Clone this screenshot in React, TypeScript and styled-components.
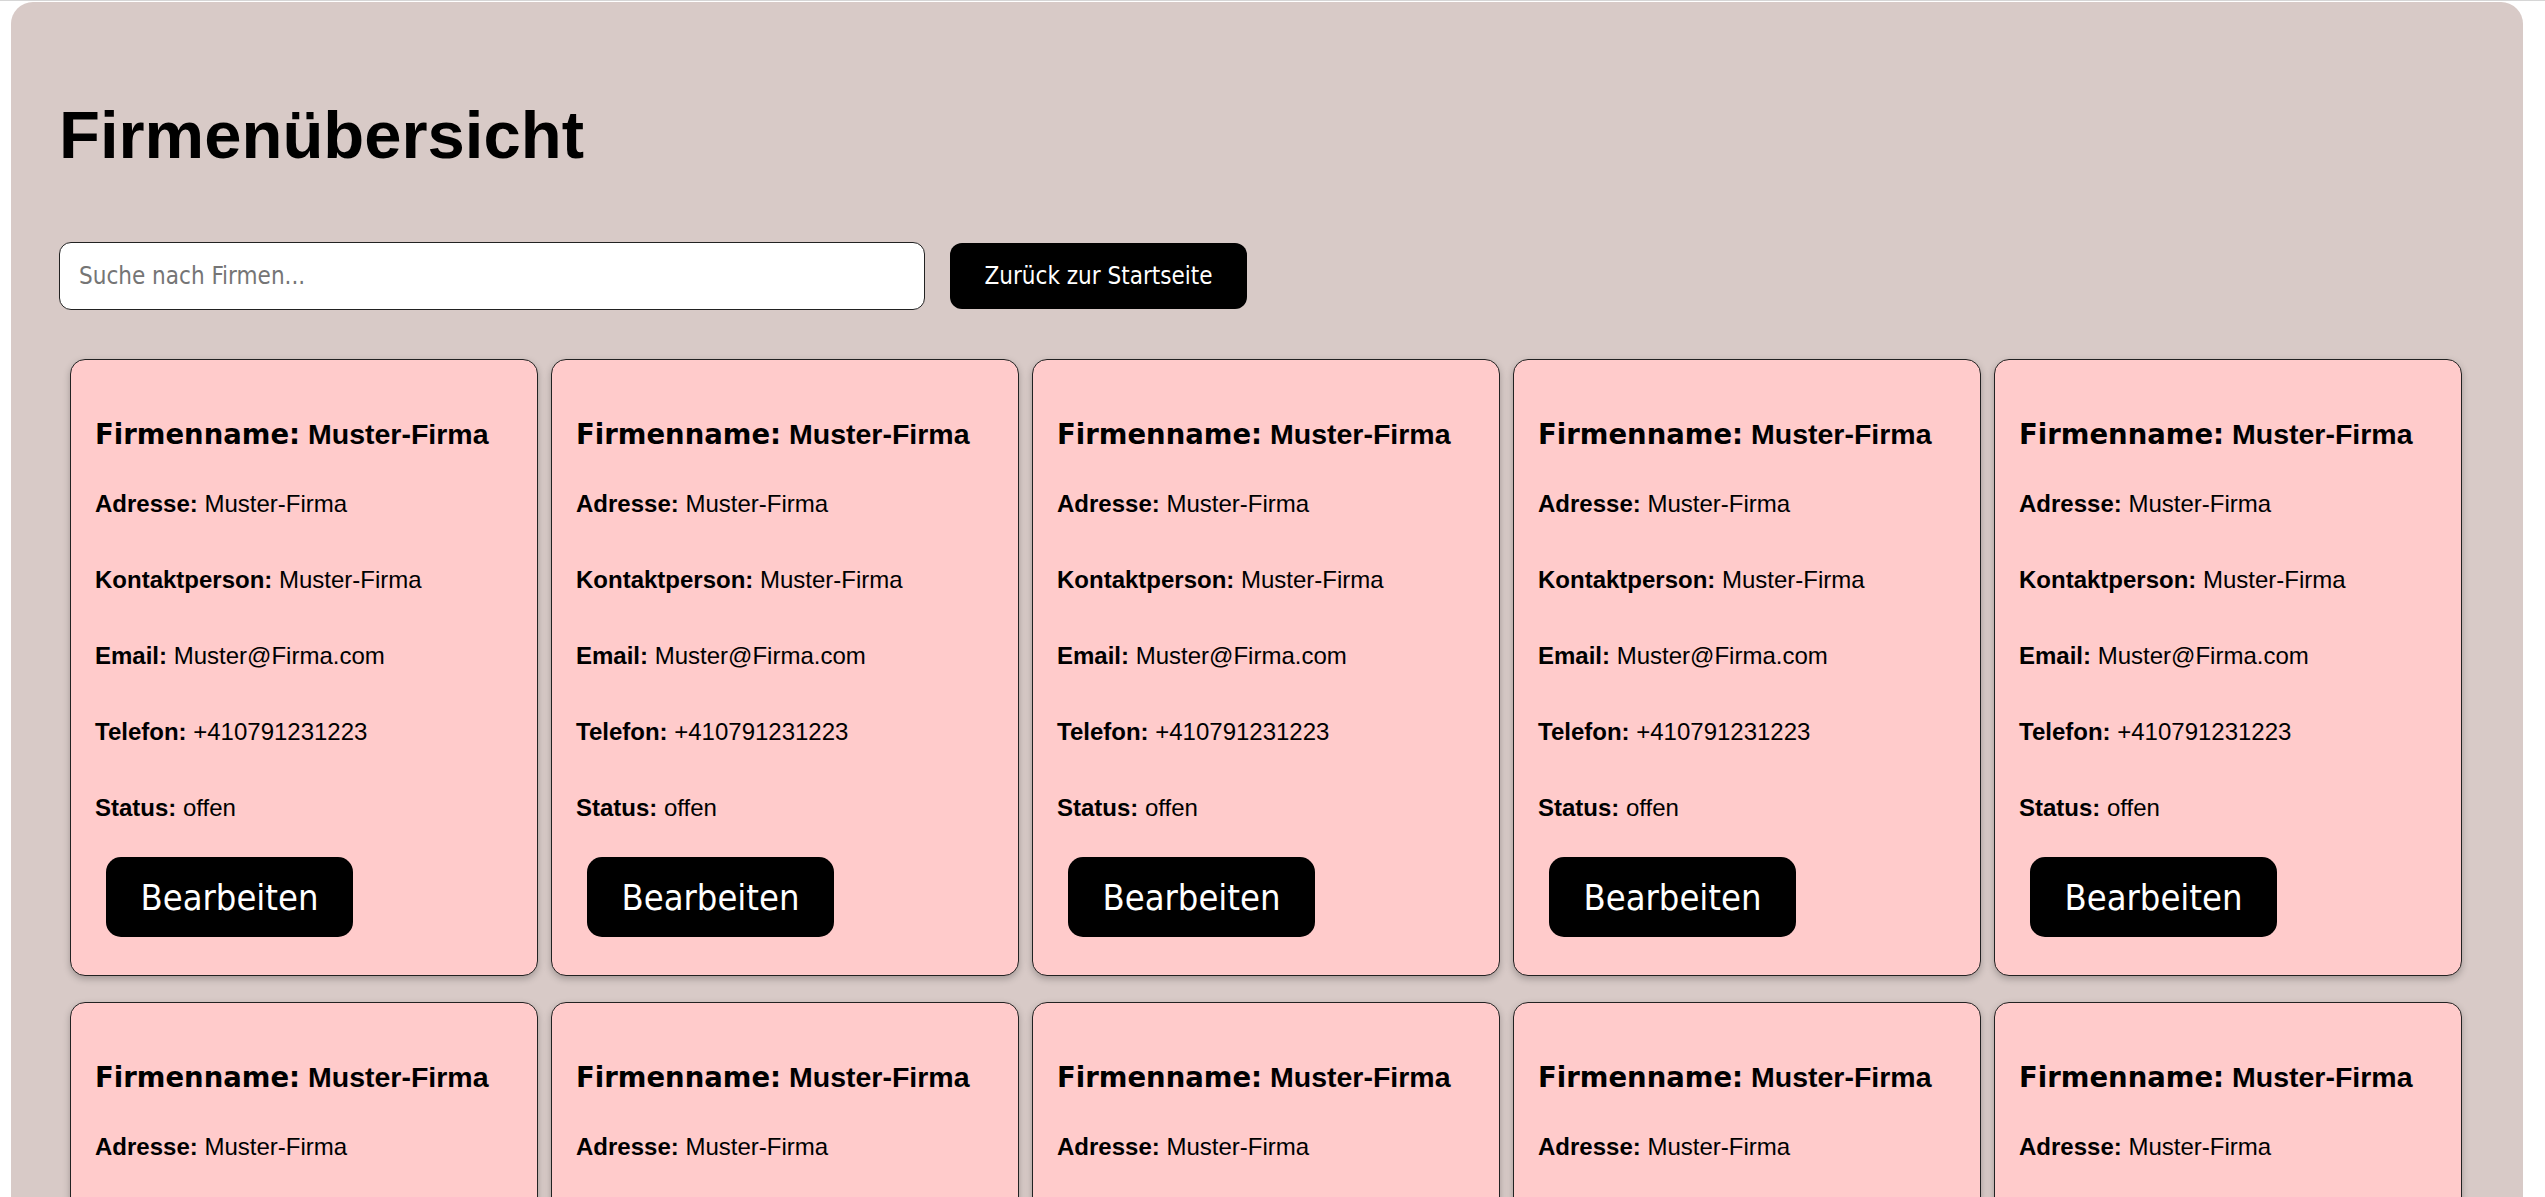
import React from 'react';
import styled, { createGlobalStyle } from 'styled-components';

interface Company {
  id: number;
  name: string;
  address: string;
  contact: string;
  email: string;
  phone: string;
  status: string;
}

const companies: Company[] = Array.from({ length: 10 }, (_, i) => ({
  id: i + 1,
  name: 'Muster-Firma',
  address: 'Muster-Firma',
  contact: 'Muster-Firma',
  email: 'Muster@Firma.com',
  phone: '+410791231223',
  status: 'offen',
}));

const uiFont = `'DejaVu Sans Condensed', 'Open Sans', sans-serif`;
const textFont = `'Liberation Sans', Arial, sans-serif`;

const GlobalStyle = createGlobalStyle`
  html, body {
    margin: 0;
    background: #ffffff;
    overflow: hidden;
  }
  body {
    box-shadow: inset 0 1px 0 #d6d6d6;
    font-family: ${textFont};
  }
`;

const FirmenUebersicht: React.FC = () => {
  return (
    <>
      <GlobalStyle />
      <Page>
        <Title>Firmenübersicht</Title>

        <SearchRow>
          <SearchInput type="text" placeholder="Suche nach Firmen..." />
          <BackButton>Zurück zur Startseite</BackButton>
        </SearchRow>

        <CardGrid>
          {companies.map((c) => (
            <Card key={c.id}>
              <CardTitle>
                <CardTitleLabel>Firmenname:</CardTitleLabel> {c.name}
              </CardTitle>
              <Fields>
                <Field>
                  <strong>Adresse:</strong> {c.address}
                </Field>
                <Field>
                  <strong>Kontaktperson:</strong> {c.contact}
                </Field>
                <Field>
                  <strong>Email:</strong> {c.email}
                </Field>
                <Field>
                  <strong>Telefon:</strong> {c.phone}
                </Field>
                <Field>
                  <strong>Status:</strong> {c.status}
                </Field>
              </Fields>
              <EditButton>Bearbeiten</EditButton>
            </Card>
          ))}
        </CardGrid>
      </Page>
    </>
  );
};

const Page = styled.div`
  margin: 2px 22px 0 11px;
  padding: 94px 48px 60px;
  background: #d8cac7;
  border-radius: 22px;
`;

const Title = styled.h1`
  margin: 0 0 69px 0;
  font-family: ${textFont};
  font-weight: 700;
  font-size: 67px;
  line-height: 77px;
  color: #000;
`;

const SearchRow = styled.div`
  display: flex;
  align-items: center;
  gap: 25px;
  margin-bottom: 49px;
`;

const SearchInput = styled.input`
  box-sizing: border-box;
  width: 866px;
  height: 68px;
  padding: 0 19px;
  background: #fff;
  border: 1px solid #222;
  border-radius: 12px;
  font-family: ${uiFont};
  font-size: 24px;
  color: #000;
  outline: none;

  &::placeholder {
    color: #757575;
  }
`;

const BackButton = styled.button`
  width: 297px;
  height: 66px;
  background: #000;
  color: #fff;
  border: none;
  border-radius: 12px;
  font-family: ${uiFont};
  font-size: 24px;
  cursor: pointer;
`;

const CardGrid = styled.div`
  display: grid;
  grid-template-columns: repeat(5, 1fr);
  column-gap: 13px;
  row-gap: 26px;
  padding: 0 13px 0 11px;
`;

const Card = styled.div`
  display: flex;
  flex-direction: column;
  align-items: flex-start;
  padding: 58px 24px 38px;
  background: #ffcbcb;
  border: 1px solid #222;
  border-radius: 15px;
  box-shadow: 0 3px 7px rgba(0, 0, 0, 0.25);
`;

const CardTitle = styled.h3`
  margin: 0;
  font-family: ${textFont};
  font-weight: 700;
  font-size: 28.5px;
  line-height: 32px;
  white-space: nowrap;
  color: #000;
`;

const CardTitleLabel = styled.span`
  font-family: 'DejaVu Sans', sans-serif;
  font-weight: 700;
  font-size: 27.5px;
`;

const Fields = styled.div`
  display: flex;
  flex-direction: column;
  gap: 48px;
  margin-top: 40px;
`;

const Field = styled.p`
  margin: 0;
  font-family: ${textFont};
  font-size: 24px;
  line-height: 28px;
  color: #000;
  white-space: nowrap;

  strong {
    font-weight: 700;
  }
`;

const EditButton = styled.button`
  margin: 35px 0 0 11px;
  width: 247px;
  height: 80px;
  background: #000;
  color: #fff;
  border: none;
  border-radius: 15px;
  font-family: ${uiFont};
  font-size: 36px;
  cursor: pointer;
`;

export default FirmenUebersicht;
